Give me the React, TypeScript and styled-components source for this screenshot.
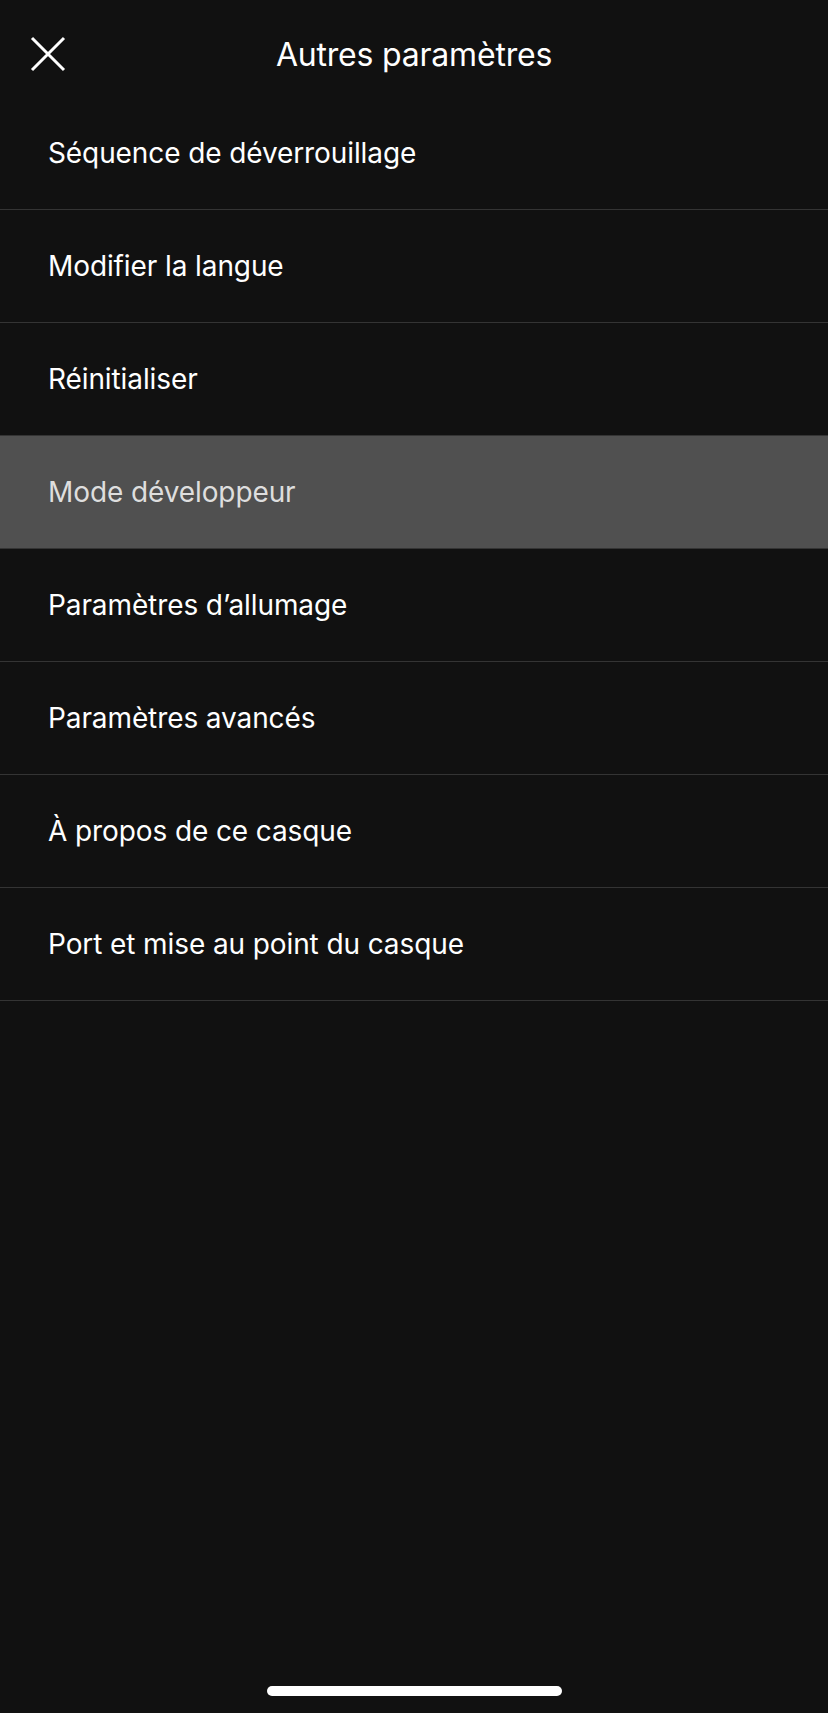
import React from "react";
import styled, { createGlobalStyle } from "styled-components";

const GlobalStyle = createGlobalStyle`
    html, body {
        margin: 0;
        padding: 0;
        background: #111111;
    }

    body {
        font-family: Inter, "Noto Sans", "Liberation Sans", sans-serif;
        -webkit-font-smoothing: antialiased;
    }
`;

const Screen = styled.div`
    display: flex;
    flex-direction: column;
    width: 828px;
    height: 1713px;
    background: #111111;
    color: #ffffff;
    overflow: hidden;
`;

const Header = styled.header`
    display: grid;
    grid-template-columns: 1fr auto 1fr;
    align-items: center;
    height: 97px;
    padding: 11px 30px 0 30px;
    box-sizing: border-box;
`;

const CloseButton = styled.button`
    display: flex;
    align-items: center;
    justify-content: center;
    width: 36px;
    height: 36px;
    padding: 0;
    border: none;
    background: none;
    cursor: pointer;
    justify-self: start;
`;

const Title = styled.h1`
    margin: 0;
    font-size: 32px;
    font-weight: 400;
    letter-spacing: -0.2px;
    color: #ffffff;
`;

const List = styled.ul`
    list-style: none;
    margin: 0;
    padding: 0;
`;

const Row = styled.li<{ $active?: boolean }>`
    display: flex;
    align-items: center;
    height: 112px;
    padding-left: 48px;
    border-bottom: 1px solid #343434;
    background: ${(p) => (p.$active ? "#505050" : "transparent")};
    color: ${(p) => (p.$active ? "#dedede" : "#ffffff")};
    font-size: 28px;
    font-weight: 400;
    letter-spacing: -0.1px;
`;

const Spacer = styled.div`
    flex: 1;
`;

const HomeBar = styled.div`
    align-self: center;
    width: 295px;
    height: 10px;
    border-radius: 5px;
    background: #ffffff;
    margin-bottom: 17px;
`;

const items = [
    "Séquence de déverrouillage",
    "Modifier la langue",
    "Réinitialiser",
    "Mode développeur",
    "Paramètres d’allumage",
    "Paramètres avancés",
    "À propos de ce casque",
    "Port et mise au point du casque",
];

function CloseIcon() {
    return (
        <svg width="36" height="36" viewBox="0 0 36 36">
            <path
                d="M2 2 L34 34 M34 2 L2 34"
                stroke="#ffffff"
                strokeWidth="3"
                strokeLinecap="butt"
                fill="none"
            />
        </svg>
    );
}

function App() {
    return (
        <>
            <GlobalStyle />
            <Screen>
                <Header>
                    <CloseButton aria-label="Fermer">
                        <CloseIcon />
                    </CloseButton>
                    <Title>Autres paramètres</Title>
                    <div />
                </Header>
                <List>
                    {items.map((label) => (
                        <Row key={label} $active={label === "Mode développeur"}>
                            {label}
                        </Row>
                    ))}
                </List>
                <Spacer />
                <HomeBar />
            </Screen>
        </>
    );
}

export default App;
